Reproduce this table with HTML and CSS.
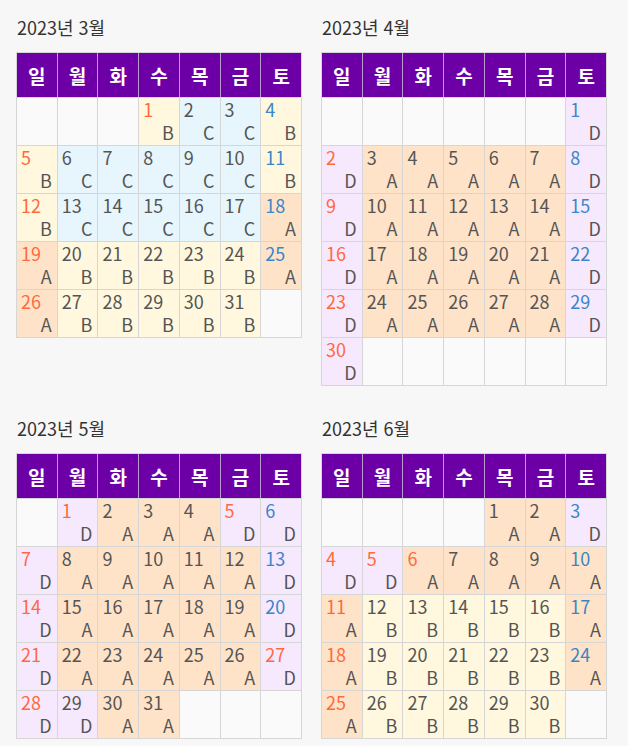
FILE: index.html
```html
<!DOCTYPE html>
<html lang="ko">
<head>
<meta charset="utf-8">
<title>2023 달력</title>
<link rel="stylesheet" href="styles.css">
</head>
<body>
<div class="page">

<section class="month">
<h2 class="title">2023년 3월</h2>
<div class="cal">
<div class="head"><div>일</div><div>월</div><div>화</div><div>수</div><div>목</div><div>금</div><div>토</div></div>
<div class="day e"></div><div class="day e"></div><div class="day e"></div>
<div class="day b"><span class="n red">1</span><span class="t">B</span></div>
<div class="day c"><span class="n">2</span><span class="t">C</span></div>
<div class="day c"><span class="n">3</span><span class="t">C</span></div>
<div class="day b"><span class="n blue">4</span><span class="t">B</span></div>

<div class="day b"><span class="n red">5</span><span class="t">B</span></div>
<div class="day c"><span class="n">6</span><span class="t">C</span></div>
<div class="day c"><span class="n">7</span><span class="t">C</span></div>
<div class="day c"><span class="n">8</span><span class="t">C</span></div>
<div class="day c"><span class="n">9</span><span class="t">C</span></div>
<div class="day c"><span class="n">10</span><span class="t">C</span></div>
<div class="day b"><span class="n blue">11</span><span class="t">B</span></div>

<div class="day b"><span class="n red">12</span><span class="t">B</span></div>
<div class="day c"><span class="n">13</span><span class="t">C</span></div>
<div class="day c"><span class="n">14</span><span class="t">C</span></div>
<div class="day c"><span class="n">15</span><span class="t">C</span></div>
<div class="day c"><span class="n">16</span><span class="t">C</span></div>
<div class="day c"><span class="n">17</span><span class="t">C</span></div>
<div class="day a"><span class="n blue">18</span><span class="t">A</span></div>

<div class="day a"><span class="n red">19</span><span class="t">A</span></div>
<div class="day b"><span class="n">20</span><span class="t">B</span></div>
<div class="day b"><span class="n">21</span><span class="t">B</span></div>
<div class="day b"><span class="n">22</span><span class="t">B</span></div>
<div class="day b"><span class="n">23</span><span class="t">B</span></div>
<div class="day b"><span class="n">24</span><span class="t">B</span></div>
<div class="day a"><span class="n blue">25</span><span class="t">A</span></div>

<div class="day a"><span class="n red">26</span><span class="t">A</span></div>
<div class="day b"><span class="n">27</span><span class="t">B</span></div>
<div class="day b"><span class="n">28</span><span class="t">B</span></div>
<div class="day b"><span class="n">29</span><span class="t">B</span></div>
<div class="day b"><span class="n">30</span><span class="t">B</span></div>
<div class="day b"><span class="n">31</span><span class="t">B</span></div>
<div class="day e"></div>
</div>
</section>

<section class="month">
<h2 class="title">2023년 4월</h2>
<div class="cal">
<div class="head"><div>일</div><div>월</div><div>화</div><div>수</div><div>목</div><div>금</div><div>토</div></div>
<div class="day e"></div><div class="day e"></div><div class="day e"></div><div class="day e"></div><div class="day e"></div><div class="day e"></div>
<div class="day d"><span class="n blue">1</span><span class="t">D</span></div>

<div class="day d"><span class="n red">2</span><span class="t">D</span></div>
<div class="day a"><span class="n">3</span><span class="t">A</span></div>
<div class="day a"><span class="n">4</span><span class="t">A</span></div>
<div class="day a"><span class="n">5</span><span class="t">A</span></div>
<div class="day a"><span class="n">6</span><span class="t">A</span></div>
<div class="day a"><span class="n">7</span><span class="t">A</span></div>
<div class="day d"><span class="n blue">8</span><span class="t">D</span></div>

<div class="day d"><span class="n red">9</span><span class="t">D</span></div>
<div class="day a"><span class="n">10</span><span class="t">A</span></div>
<div class="day a"><span class="n">11</span><span class="t">A</span></div>
<div class="day a"><span class="n">12</span><span class="t">A</span></div>
<div class="day a"><span class="n">13</span><span class="t">A</span></div>
<div class="day a"><span class="n">14</span><span class="t">A</span></div>
<div class="day d"><span class="n blue">15</span><span class="t">D</span></div>

<div class="day d"><span class="n red">16</span><span class="t">D</span></div>
<div class="day a"><span class="n">17</span><span class="t">A</span></div>
<div class="day a"><span class="n">18</span><span class="t">A</span></div>
<div class="day a"><span class="n">19</span><span class="t">A</span></div>
<div class="day a"><span class="n">20</span><span class="t">A</span></div>
<div class="day a"><span class="n">21</span><span class="t">A</span></div>
<div class="day d"><span class="n blue">22</span><span class="t">D</span></div>

<div class="day d"><span class="n red">23</span><span class="t">D</span></div>
<div class="day a"><span class="n">24</span><span class="t">A</span></div>
<div class="day a"><span class="n">25</span><span class="t">A</span></div>
<div class="day a"><span class="n">26</span><span class="t">A</span></div>
<div class="day a"><span class="n">27</span><span class="t">A</span></div>
<div class="day a"><span class="n">28</span><span class="t">A</span></div>
<div class="day d"><span class="n blue">29</span><span class="t">D</span></div>

<div class="day d"><span class="n red">30</span><span class="t">D</span></div>
<div class="day e"></div><div class="day e"></div><div class="day e"></div><div class="day e"></div><div class="day e"></div><div class="day e"></div>
</div>
</section>

<section class="month">
<h2 class="title">2023년 5월</h2>
<div class="cal">
<div class="head"><div>일</div><div>월</div><div>화</div><div>수</div><div>목</div><div>금</div><div>토</div></div>
<div class="day e"></div>
<div class="day d"><span class="n red">1</span><span class="t">D</span></div>
<div class="day a"><span class="n">2</span><span class="t">A</span></div>
<div class="day a"><span class="n">3</span><span class="t">A</span></div>
<div class="day a"><span class="n">4</span><span class="t">A</span></div>
<div class="day d"><span class="n red">5</span><span class="t">D</span></div>
<div class="day d"><span class="n blue">6</span><span class="t">D</span></div>

<div class="day d"><span class="n red">7</span><span class="t">D</span></div>
<div class="day a"><span class="n">8</span><span class="t">A</span></div>
<div class="day a"><span class="n">9</span><span class="t">A</span></div>
<div class="day a"><span class="n">10</span><span class="t">A</span></div>
<div class="day a"><span class="n">11</span><span class="t">A</span></div>
<div class="day a"><span class="n">12</span><span class="t">A</span></div>
<div class="day d"><span class="n blue">13</span><span class="t">D</span></div>

<div class="day d"><span class="n red">14</span><span class="t">D</span></div>
<div class="day a"><span class="n">15</span><span class="t">A</span></div>
<div class="day a"><span class="n">16</span><span class="t">A</span></div>
<div class="day a"><span class="n">17</span><span class="t">A</span></div>
<div class="day a"><span class="n">18</span><span class="t">A</span></div>
<div class="day a"><span class="n">19</span><span class="t">A</span></div>
<div class="day d"><span class="n blue">20</span><span class="t">D</span></div>

<div class="day d"><span class="n red">21</span><span class="t">D</span></div>
<div class="day a"><span class="n">22</span><span class="t">A</span></div>
<div class="day a"><span class="n">23</span><span class="t">A</span></div>
<div class="day a"><span class="n">24</span><span class="t">A</span></div>
<div class="day a"><span class="n">25</span><span class="t">A</span></div>
<div class="day a"><span class="n">26</span><span class="t">A</span></div>
<div class="day d"><span class="n red">27</span><span class="t">D</span></div>

<div class="day d"><span class="n red">28</span><span class="t">D</span></div>
<div class="day d"><span class="n">29</span><span class="t">D</span></div>
<div class="day a"><span class="n">30</span><span class="t">A</span></div>
<div class="day a"><span class="n">31</span><span class="t">A</span></div>
<div class="day e"></div><div class="day e"></div><div class="day e"></div>
</div>
</section>

<section class="month">
<h2 class="title">2023년 6월</h2>
<div class="cal">
<div class="head"><div>일</div><div>월</div><div>화</div><div>수</div><div>목</div><div>금</div><div>토</div></div>
<div class="day e"></div><div class="day e"></div><div class="day e"></div><div class="day e"></div>
<div class="day a"><span class="n">1</span><span class="t">A</span></div>
<div class="day a"><span class="n">2</span><span class="t">A</span></div>
<div class="day d"><span class="n blue">3</span><span class="t">D</span></div>

<div class="day d"><span class="n red">4</span><span class="t">D</span></div>
<div class="day d"><span class="n red">5</span><span class="t">D</span></div>
<div class="day a"><span class="n red">6</span><span class="t">A</span></div>
<div class="day a"><span class="n">7</span><span class="t">A</span></div>
<div class="day a"><span class="n">8</span><span class="t">A</span></div>
<div class="day a"><span class="n">9</span><span class="t">A</span></div>
<div class="day a"><span class="n blue">10</span><span class="t">A</span></div>

<div class="day a"><span class="n red">11</span><span class="t">A</span></div>
<div class="day b"><span class="n">12</span><span class="t">B</span></div>
<div class="day b"><span class="n">13</span><span class="t">B</span></div>
<div class="day b"><span class="n">14</span><span class="t">B</span></div>
<div class="day b"><span class="n">15</span><span class="t">B</span></div>
<div class="day b"><span class="n">16</span><span class="t">B</span></div>
<div class="day a"><span class="n blue">17</span><span class="t">A</span></div>

<div class="day a"><span class="n red">18</span><span class="t">A</span></div>
<div class="day b"><span class="n">19</span><span class="t">B</span></div>
<div class="day b"><span class="n">20</span><span class="t">B</span></div>
<div class="day b"><span class="n">21</span><span class="t">B</span></div>
<div class="day b"><span class="n">22</span><span class="t">B</span></div>
<div class="day b"><span class="n">23</span><span class="t">B</span></div>
<div class="day a"><span class="n blue">24</span><span class="t">A</span></div>

<div class="day a"><span class="n red">25</span><span class="t">A</span></div>
<div class="day b"><span class="n">26</span><span class="t">B</span></div>
<div class="day b"><span class="n">27</span><span class="t">B</span></div>
<div class="day b"><span class="n">28</span><span class="t">B</span></div>
<div class="day b"><span class="n">29</span><span class="t">B</span></div>
<div class="day b"><span class="n">30</span><span class="t">B</span></div>
<div class="day e"></div>
</div>
</section>

</div>
</body>
</html>
```

FILE: styles.css
```css
html, body {
  margin: 0;
  padding: 0;
  background: #f7f7f7;
}

body {
  font-family: "Noto Sans CJK KR", "Noto Sans", sans-serif;
  color: #555;
}

.page {
  display: grid;
  grid-template-columns: 286px 286px;
  column-gap: 19px;
  row-gap: 15px;
  padding: 0 16px;
  align-items: start;
}

.title {
  margin: 0;
  padding: 14px 0 12px 1px;
  font-size: 18px;
  line-height: 26px;
  font-weight: 400;
  color: #333;
}

.cal {
  display: grid;
  grid-template-columns: repeat(7, 1fr);
  grid-template-rows: 44px;
  grid-auto-rows: 47px;
  gap: 1px;
  width: 286px;
  box-sizing: border-box;
  border: 1px solid #d6d6d6;
  background: #d6d6d6;
}

.head {
  grid-column: 1 / -1;
  display: grid;
  grid-template-columns: repeat(7, 1fr);
  gap: 1px;
  height: 44px;
  background: #b99ccd;
}

.head div {
  background: #6c00a6;
  color: #fff;
  font-weight: 700;
  font-size: 19px;
  display: flex;
  align-items: center;
  justify-content: center;
}

.day {
  display: flex;
  flex-direction: column;
  justify-content: space-between;
  padding: 1px 5px 3px 4px;
  font-size: 18px;
  line-height: 20px;
  min-width: 0;
}

.n {
  color: #555;
}

.t {
  text-align: right;
  color: #555;
}

.n.red { color: #ff6a3d; }
.n.blue { color: #3a86c8; }

.a { background: #ffe3c9; }
.b { background: #fff8de; }
.c { background: #e7f5fd; }
.d { background: #f7e9fd; }
.e { background: #fafafa; }
```
